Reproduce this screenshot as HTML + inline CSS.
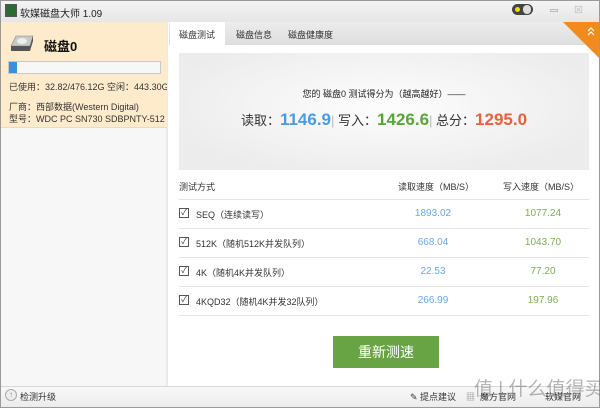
<!DOCTYPE html>
<html><head><meta charset="utf-8"><style>
*{margin:0;padding:0;box-sizing:border-box}
body{width:600px;height:408px;overflow:hidden;background:#fff;font-family:"Liberation Sans","Noto Sans CJK SC",sans-serif;font-size:9px;color:#333;position:relative}
.abs{position:absolute}
#win{position:absolute;left:0;top:0;width:600px;height:408px;border:1px solid #9a9a9a}
#title{left:1px;top:1px;width:598px;height:21px;background:linear-gradient(#f4f4f4,#e6e6e6)}
#left{left:1px;top:22px;width:167px;height:364px;background:#f7f7f7;border-right:2px solid #eaeaea}
#sel{left:1px;top:22px;width:166px;height:106px;background:#fdebcc;border-bottom:1px solid #eadcc0}
#tabs{left:169px;top:22px;width:429px;height:23px;background:linear-gradient(#ececec,#dedede)}
#score{left:179px;top:53px;width:410px;height:117px;background:radial-gradient(ellipse at 50% 45%,#fdfdfd,#ececec 80%)}
.row{left:179px;width:410px;height:1px;background:#e4e4e4}
.cb{position:absolute;left:179px;width:10px;height:10px;border:1px solid #555;font-size:8px;line-height:8px;text-align:center}
.lbl{left:196px;font-size:9px}
.r{width:80px;text-align:center;font-size:10px}
#bottom{left:1px;top:386px;width:598px;height:21px;background:linear-gradient(#f8f8f8,#ececec);border-top:1px solid #d8d8d8}
</style></head><body>
<div id="win"></div>
<div id="title" class="abs"></div>
<div class="abs" style="left:5px;top:4px;width:12px;height:13px;background:#2c6b34;border:1px solid #555"></div>
<div class="abs" style="left:20px;top:5px;font-size:10px;color:#222">软媒磁盘大师 1.09</div>
<div class="abs" style="left:512px;top:4px;width:21px;height:11px;border-radius:6px;background:#444"></div>
<div class="abs" style="left:515px;top:7px;width:5px;height:5px;border-radius:3px;background:#f0e000"></div>
<div class="abs" style="left:523px;top:5px;width:8px;height:9px;border-radius:5px;background:#ddd"></div>
<div class="abs" style="left:550px;top:9px;width:8px;height:3px;border:1px solid #bbb"></div>
<div class="abs" style="left:574px;top:3px;font-size:9px;color:#bbb">⊠</div>
<div id="left" class="abs"></div>
<div id="sel" class="abs"></div>
<svg class="abs" style="left:10px;top:35px" width="26" height="16"><path d="M6 1h17l-3 10H1z" fill="#c9c9c9" stroke="#888" stroke-width=".6"/><path d="M1 11h19l3-10v5l-3 10H1z" fill="#555"/><ellipse cx="12" cy="6" rx="5" ry="3" fill="#eee"/></svg>
<div class="abs" style="left:44px;top:36px;font-size:13px;font-weight:bold;color:#111">磁盘0</div>
<div class="abs" style="left:8px;top:61px;width:153px;height:13px;background:#f7f7f7;border:1px solid #c8c8c8"></div>
<div class="abs" style="left:9px;top:62px;width:8px;height:11px;background:#3f8fd8"></div>
<div class="abs" style="left:9px;top:80px;font-size:9px;white-space:nowrap;width:158px;overflow:hidden">已使用：32.82/476.12G 空闲：443.30GB</div>
<div class="abs" style="left:9px;top:100px;font-size:9px">厂商：西部数据(Western Digital)</div>
<div class="abs" style="left:9px;top:112px;font-size:9px">型号：WDC PC SN730 SDBPNTY-512</div>
<div id="tabs" class="abs"></div>
<div class="abs" style="left:170px;top:22px;width:55px;height:23px;background:#fff"></div>
<div class="abs" style="left:179px;top:28px;font-size:9px">磁盘测试</div>
<div class="abs" style="left:236px;top:28px;font-size:9px">磁盘信息</div>
<div class="abs" style="left:288px;top:28px;font-size:9px">磁盘健康度</div>
<svg class="abs" style="left:563px;top:22px" width="36" height="36"><path d="M0 0H36V36z" fill="#f28a1c"/><path d="M25 9l3-3 3 3M25 13l3-3 3 3" stroke="#fff" fill="none" stroke-width="1.2"/></svg>
<div id="score" class="abs"></div>
<div class="abs" style="left:179px;top:87px;width:410px;text-align:center;font-size:9px;color:#222">您的 磁盘0 测试得分为（越高越好）——</div>
<div class="abs" style="left:179px;top:110px;width:410px;text-align:center;font-size:13px;color:#333;white-space:nowrap">读取：<b style="font-size:17px;color:#4a9be0">1146.9</b><span style="color:#bbb">|</span> 写入：<b style="font-size:17px;color:#5aa43a">1426.6</b><span style="color:#bbb">|</span> 总分：<b style="font-size:17px;color:#e8603c">1295.0</b></div>
<div class="abs" style="left:179px;top:180px;font-size:9px">测试方式</div>
<div class="abs" style="left:398px;top:180px;font-size:9px">读取速度（MB/S）</div>
<div class="abs" style="left:503px;top:180px;font-size:9px">写入速度（MB/S）</div>
<div class="row abs" style="top:199px"></div>
<div class="row abs" style="top:228px"></div>
<div class="row abs" style="top:257px"></div>
<div class="row abs" style="top:286px"></div>
<div class="row abs" style="top:315px"></div>
<div class="cb" style="top:208px">✓</div><div class="abs lbl" style="top:208px">SEQ（连续读写）</div>
<div class="cb" style="top:237px">✓</div><div class="abs lbl" style="top:237px">512K（随机512K并发队列）</div>
<div class="cb" style="top:266px">✓</div><div class="abs lbl" style="top:266px">4K（随机4K并发队列）</div>
<div class="cb" style="top:295px">✓</div><div class="abs lbl" style="top:295px">4KQD32（随机4K并发32队列）</div>
<div class="abs r" style="left:393px;top:208px;color:#6aa8e0">1893.02</div><div class="abs r" style="left:503px;top:208px;color:#7ab050">1077.24</div>
<div class="abs r" style="left:393px;top:237px;color:#6aa8e0">668.04</div><div class="abs r" style="left:503px;top:237px;color:#7ab050">1043.70</div>
<div class="abs r" style="left:393px;top:266px;color:#6aa8e0">22.53</div><div class="abs r" style="left:503px;top:266px;color:#7ab050">77.20</div>
<div class="abs r" style="left:393px;top:295px;color:#6aa8e0">266.99</div><div class="abs r" style="left:503px;top:295px;color:#7ab050">197.96</div>
<div class="abs" style="left:333px;top:336px;width:106px;height:32px;background:#68a444;color:#fff;font-size:14px;text-align:center;line-height:32px">重新测速</div>
<div id="bottom" class="abs"></div>
<div class="abs" style="left:5px;top:389px;width:12px;height:12px;border-radius:6px;border:1px solid #aaa;background:#eee;font-size:8px;text-align:center;line-height:10px;color:#888">↑</div>
<div class="abs" style="left:20px;top:390px;font-size:9px">检测升级</div>
<div class="abs" style="left:410px;top:390px;font-size:9px">✎ 提点建议</div>
<div class="abs" style="left:466px;top:390px;font-size:9px;color:#999">▦</div>
<div class="abs" style="left:480px;top:390px;font-size:9px">魔方官网</div>
<div class="abs" style="left:545px;top:390px;font-size:9px">软媒官网</div>
<div class="abs" style="left:474px;top:374px;font-size:19px;color:rgba(110,110,110,.5);white-space:nowrap">值 | 什么值得买</div>
</body></html>
